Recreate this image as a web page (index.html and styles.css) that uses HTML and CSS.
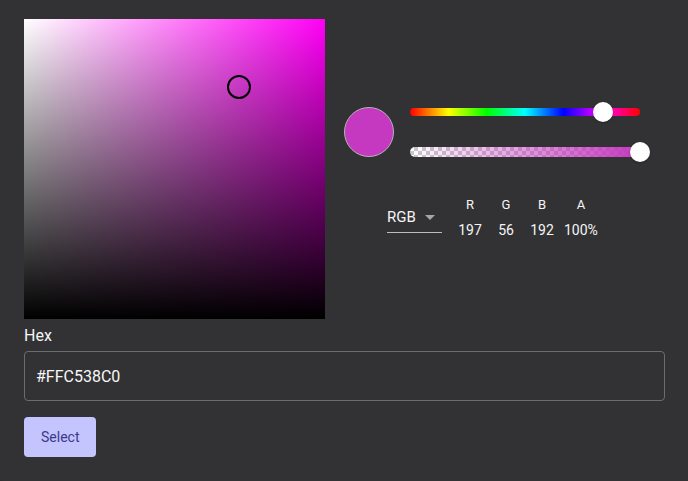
FILE: index.html
```html
<!DOCTYPE html>
<html lang="en">
<head>
<meta charset="utf-8">
<title>Color picker</title>
<link rel="stylesheet" href="styles.css">
</head>
<body>
<div class="dialog">
  <div class="picker">
    <div class="sv">
      <div class="sv-pointer"></div>
    </div>
    <div class="side">
      <div class="top-row">
        <div class="swatch"></div>
        <div class="sliders">
          <div class="slider">
            <div class="track hue"></div>
            <div class="thumb hue-thumb"></div>
          </div>
          <div class="slider">
            <div class="track alpha"></div>
            <div class="thumb alpha-thumb"></div>
          </div>
        </div>
      </div>
      <div class="values-row">
        <div class="mode-select">
          <span class="mode-text">RGB</span>
          <span class="caret"></span>
        </div>
        <div class="channels">
          <div class="channel"><span class="ch-label">R</span><span class="ch-value">197</span></div>
          <div class="channel"><span class="ch-label">G</span><span class="ch-value">56</span></div>
          <div class="channel"><span class="ch-label">B</span><span class="ch-value">192</span></div>
          <div class="channel"><span class="ch-label">A</span><span class="ch-value">100%</span></div>
        </div>
      </div>
    </div>
  </div>
  <label class="hex-label">Hex</label>
  <div class="hex-input">#FFC538C0</div>
  <button class="select-btn">Select</button>
</div>
</body>
</html>
```

FILE: styles.css
```css
html, body {
  margin: 0;
  padding: 0;
  background: #323234;
  font-family: Roboto, "Liberation Sans", sans-serif;
  color: #f2f2f2;
}

.dialog {
  box-sizing: border-box;
  width: 688px;
  height: 481px;
  padding: 19px 24px 0 24px;
  border-left: 1px solid #2a2a2c;
  border-bottom-left-radius: 4px;
  display: flex;
  flex-direction: column;
  align-items: flex-start;
  margin-left: -1px;
}

.picker {
  display: flex;
  gap: 20px;
  align-items: flex-start;
}

.sv {
  position: relative;
  width: 301px;
  height: 300px;
  flex: none;
  background:
    linear-gradient(to top, #000, rgba(0, 0, 0, 0)),
    linear-gradient(to right, #fff, #ff00f6);
}

.sv-pointer {
  position: absolute;
  left: 203px;
  top: 56px;
  width: 24px;
  height: 24px;
  box-sizing: border-box;
  border: 2px solid #000;
  border-radius: 50%;
}

.side {
  margin-top: 83px;
  margin-left: -1px;
  display: flex;
  flex-direction: column;
}

.top-row {
  display: flex;
  align-items: center;
  gap: 16px;
}

.swatch {
  width: 50px;
  height: 50px;
  box-sizing: border-box;
  border-radius: 50%;
  background: #c538c0;
  border: 1px solid #b4b4b4;
  flex: none;
}

.sliders {
  width: 230px;
  display: flex;
  flex-direction: column;
  gap: 20px;
}

.slider {
  position: relative;
  height: 20px;
  display: flex;
  align-items: center;
}

.track {
  width: 100%;
}

.hue {
  height: 8px;
  border-radius: 4px;
  background: linear-gradient(to right, #f00 0%, #ff0 16.7%, #0f0 33.3%, #0ff 50%, #00f 66.7%, #f0f 83.3%, #f00 100%);
}

.alpha {
  height: 10px;
  border-radius: 5px;
  background:
    linear-gradient(to right, rgba(197, 56, 192, 0), rgb(197, 56, 192)),
    repeating-conic-gradient(#c8c8c8 0 25%, #ffffff 0 50%) 0 0 / 8px 8px;
}

.thumb {
  position: absolute;
  top: 0;
  width: 20px;
  height: 20px;
  border-radius: 50%;
  background: #fff;
  box-shadow: 0 1px 2px rgba(0, 0, 0, 0.3);
}

.hue-thumb {
  left: 183px;
}

.alpha-thumb {
  left: 220px;
}

.values-row {
  margin-top: 35px;
  margin-left: 43px;
  display: flex;
  align-items: center;
  gap: 14px;
}

.mode-select {
  box-sizing: border-box;
  width: 55px;
  padding: 2px 7px 5px 0;
  border-bottom: 1px solid #bdbdbd;
  display: flex;
  align-items: center;
  justify-content: space-between;
}

.mode-text {
  font-size: 15px;
  line-height: 20px;
  color: #f5f5f5;
}

.caret {
  width: 0;
  height: 0;
  border-left: 5px solid transparent;
  border-right: 5px solid transparent;
  border-top: 5px solid #a6a6a6;
  margin-top: 1px;
}

.channels {
  display: flex;
  gap: 8px;
}

.channel {
  min-width: 28px;
  display: flex;
  flex-direction: column;
  align-items: center;
  gap: 7px;
}

.ch-label {
  font-size: 13px;
  line-height: 16px;
  font-weight: 400;
  color: #f5f5f5;
}

.ch-value {
  font-size: 14px;
  line-height: 20px;
  color: #f5f5f5;
}

.hex-label {
  margin-top: 5px;
  font-size: 16px;
  line-height: 24px;
  color: #f5f5f5;
}

.hex-input {
  margin-top: 3px;
  box-sizing: border-box;
  width: 641px;
  height: 50px;
  border: 1px solid #6c6c6e;
  border-radius: 4px;
  padding: 0 11px;
  display: flex;
  align-items: center;
  font-size: 16px;
  color: #f7f7f7;
}

.select-btn {
  margin-top: 16px;
  height: 40px;
  padding: 0 17px;
  border: none;
  border-radius: 4px;
  background: #c4c4ff;
  color: #3a3a8c;
  font-family: Roboto, "Liberation Sans", sans-serif;
  font-size: 14px;
}
```
